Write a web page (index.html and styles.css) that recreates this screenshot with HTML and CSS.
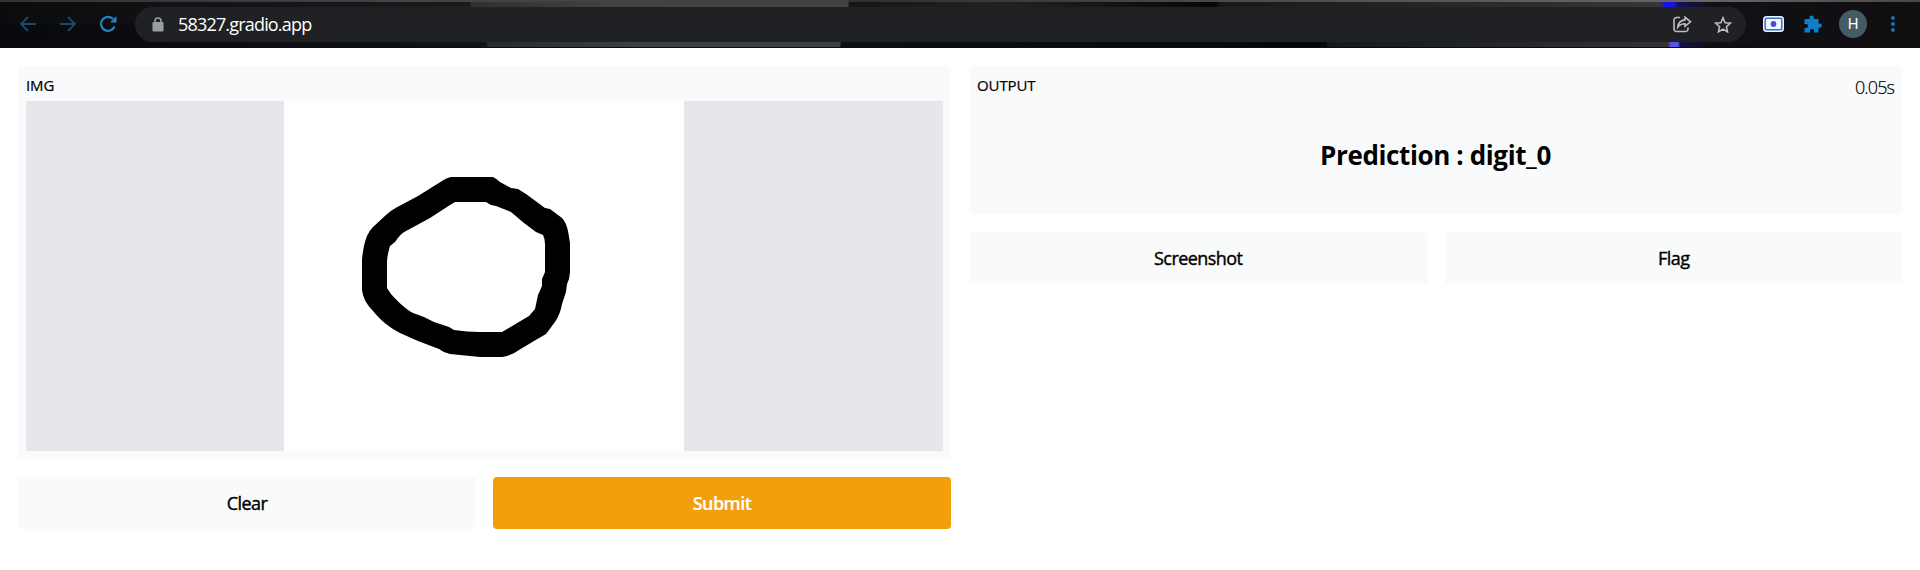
FILE: index.html
```html
<!DOCTYPE html>
<html lang="en">
<head>
<meta charset="utf-8">
<title>58327.gradio.app</title>
<link rel="stylesheet" href="styles.css">
</head>
<body>
<header class="browser-bar">
  <nav class="nav-icons">
    <svg width="18" height="18" viewBox="0 0 18 18" class="dim"><path d="M17 9H2M9 2L2 9l7 7"/></svg>
    <svg width="18" height="18" viewBox="0 0 18 18" class="dim"><path d="M1 9h15M9 2l7 7-7 7"/></svg>
    <svg width="18" height="18" viewBox="0 0 18 18" class="reload"><path d="M15.5 11.5A7 7 0 1 1 14 4"/><path class="tip" d="M17.500 1v6.500H11z"/></svg>
  </nav>
  <div class="address">
    <svg class="lock" width="12" height="15" viewBox="0 0 12 15"><path d="M3 6V4a3 3 0 0 1 6 0v2" fill="none" stroke="#9a9da2" stroke-width="1.6"/><rect x="0.5" y="5" width="11" height="9.5" rx="1.2" fill="#9a9da2"/></svg>
    <span class="url">58327.gradio.app</span>
    <svg class="share" width="19" height="17" viewBox="0 0 19 17"><path d="M7 1.5H3.5a2.500 2.500 0 0 0-2.500 2.500v9a2.500 2.500 0 0 0 2.500 2.500h9a2.500 2.500 0 0 0 2.500-2.500v-1.500"/><path d="M12 1.200l5.500 4.600L12 10.300V7.700c-3.400 0-5.500 1-7.200 3.400.3-3.600 2.700-6.600 7.200-7.200z"/></svg>
    <svg class="star" width="18" height="17" viewBox="0 0 18 17"><path d="M9 1.900l2.100 4.800 5.200.5-3.900 3.500 1.100 5.100L9 13.100l-4.500 2.700 1.100-5.100L1.700 7.200l5.200-.5z"/></svg>
  </div>
  <div class="extensions">
    <svg width="21" height="16" viewBox="0 0 21 16"><rect width="21" height="16" rx="3.500" fill="#eef5ff"/><rect x="2.200" y="2.200" width="16.600" height="11.600" rx="1.500" fill="#f4f7ff" stroke="#2a74dc" stroke-width="1.500"/><circle cx="10.500" cy="8" r="2.900" fill="#4a4fc8"/></svg>
    <svg width="18" height="18" viewBox="0 0 18 18"><path fill="#137cc9" d="M1.500 4h4V2.500a2 2 0 0 1 4.200 0V4h4.800v4.500h1.300a2.100 2.100 0 0 1 0 4.200h-1.300V17.500H10V16a2 2 0 0 0-4 0v1.500H.5V13H2a2 2 0 0 0 0-4.100H.5V5a1 1 0 0 1 1-1z"/></svg>
    <span class="avatar">H</span>
    <svg width="4" height="16" viewBox="0 0 4 16" fill="#1d76b5"><circle cx="2" cy="2" r="1.900"/><circle cx="2" cy="8" r="1.900"/><circle cx="2" cy="14" r="1.900"/></svg>
  </div>
</header>
<main class="interface">
  <section class="column">
    <div class="panel input-panel">
      <div class="label">IMG</div>
      <div class="sketch">
        <svg class="canvas" width="400" height="350" viewBox="284 101 400 350"><path fill-rule="evenodd" d="M451 177Q456 177 493 177Q497 179 500 182L511 188L518 189L526 194L545 208L550 209L562 218Q566 222 568 231L570 243V272L569 279L567 284L566 292L562 304C560 315 556 321 552 326L546 334L534 341L519 350Q511 356 502 357H480L450 354Q444 353 439 349L418 341L400 333C389 327 381 321 373 311Q363 301 362 290V260Q363 246 367 236Q369 231 373 227L386 215Q391 210 403 204L418 196L442 181Q446 178 451 177ZM455 202L450 205L430 218L406 231Q400 234 395 242L390 246Q387 256 387 262V288L391 294C399 303 407 310 413 313L424 317L434 322L449 327L454 330Q467 332 479 332H502L529 316L535 309L538 295L542 286V279L545 272V244Q545 239 543 235L536 232L524 223L511 212L496 206L491 205L486 202Z"/></svg>
      </div>
    </div>
    <div class="buttons">
      <button>Clear</button>
      <button class="submit">Submit</button>
    </div>
  </section>
  <section class="column">
    <div class="panel output-panel">
      <div class="output-head"><span class="label">OUTPUT</span><span class="duration">0.05s</span></div>
      <h1>Prediction : digit_0</h1>
    </div>
    <div class="buttons">
      <button>Screenshot</button>
      <button>Flag</button>
    </div>
  </section>
</main>
</body>
</html>
```
FILE: styles.css
```css
* { box-sizing: border-box; }
body { margin: 0; background: #fff; color: #000; font-family: "Open Sans", "Noto Sans", sans-serif; }
.browser-bar {
  height: 48px;
  display: flex;
  align-items: center;
  padding: 0 25px 0 19px;
  background:
    linear-gradient(90deg, #333 0, #39393b 160px, #444 400px, #414141 848px, #303030 849px, #555 1400px, #666 1700px, #484848 1920px) 0 0 / 100% 2px no-repeat,
    linear-gradient(#0a0a18, #0a0a18) 0 47px / 100% 1px no-repeat,
    linear-gradient(90deg, #0c0b0e 0, #1c1a1b 470px, #303030 471px, #434343 620px, #434343 848px, #151515 849px, #222 1000px, #060606 1216px, #181818 1220px, #363636 1660px, #1414e8 1665px, #1414e8 1674px, #17106a 1677px, #111014 1710px, #100e11 1920px) 0 2px / 100% 22px no-repeat,
    linear-gradient(90deg, #08090c 0, #10131a 486px, #262a2d 488px, #3c4143 640px, #3c4143 840px, #0b1113 841px, #04070a 1326px, #15191b 1328px, #333 1668px, #5555ee 1671px, #5555ee 1678px, #15114a 1680px, #111014 1710px, #100e11 1920px);
}
.nav-icons { display: flex; gap: 22px; }
.nav-icons svg { fill: none; stroke-width: 1.800; }
.dim { stroke: #174a6c; }
.reload { stroke: #2482c7; }
.reload path { stroke-width: 2.200; }
.reload .tip { fill: #2482c7; stroke: none; }
.address {
  flex: 1;
  height: 35px;
  margin-left: 18px;
  padding: 0 14px 0 17px;
  border-radius: 18px;
  background: #202124;
  display: flex;
  align-items: center;
}
.url { margin-left: 14px; color: #fff; font-size: 18px; letter-spacing: -0.820px; }
.share { margin-left: auto; }
.star { margin-left: 22px; }
.share, .star { fill: none; stroke: #c0bcc0; stroke-width: 1.600; }
.extensions { display: flex; align-items: center; margin-left: 17px; }
.extensions svg:nth-child(2) { margin-left: 20px; }
.avatar {
  width: 28px; height: 28px; margin: 0 24px 0 17px;
  border-radius: 50%;
  background: #455a64; color: #fff;
  font: 15px/28px Roboto, sans-serif;
  text-align: center;
}
.interface { display: grid; grid-template-columns: 933px 934px; column-gap: 18px; padding: 18px 17px 18px 18px; }
.panel { background: #f9fafb; border-radius: 4px; padding: 8px 9px; }
.input-panel { height: 393px; padding: 8px; }
.output-panel { height: 148px; padding-left: 8px; }
.label { font-size: 15px; line-height: 23px; height: 27px; display: block; letter-spacing: -0.100px; -webkit-text-stroke: 0.200px #000; }
.sketch { height: 350px; background: #e5e7eb; display: flex; padding-left: 258px; }
.canvas { background: #fff; }
.buttons { display: grid; grid-template-columns: 1fr 1fr; column-gap: 17px; margin-top: 18px; }
button {
  height: 52px; border: 0; border-radius: 4px; padding: 0;
  background: #f9fafb; color: #000;
  font: 500 18px/52px "Open Sans", "Noto Sans", sans-serif;
  letter-spacing: -0.550px;
  -webkit-text-stroke: 0.400px #000;
}
.submit { background: #f59e0b; color: #fff; font-weight: 600; -webkit-text-stroke: 0.200px #fff; }
.output-head { display: flex; justify-content: space-between; }
.duration { font-size: 18px; font-weight: 300; line-height: 27px; letter-spacing: -0.900px; -webkit-text-stroke: 0.200px #000; }
h1 { margin: 36px 0 0; text-align: center; font-size: 26px; line-height: 36px; font-weight: 700; letter-spacing: -0.380px; }
```
